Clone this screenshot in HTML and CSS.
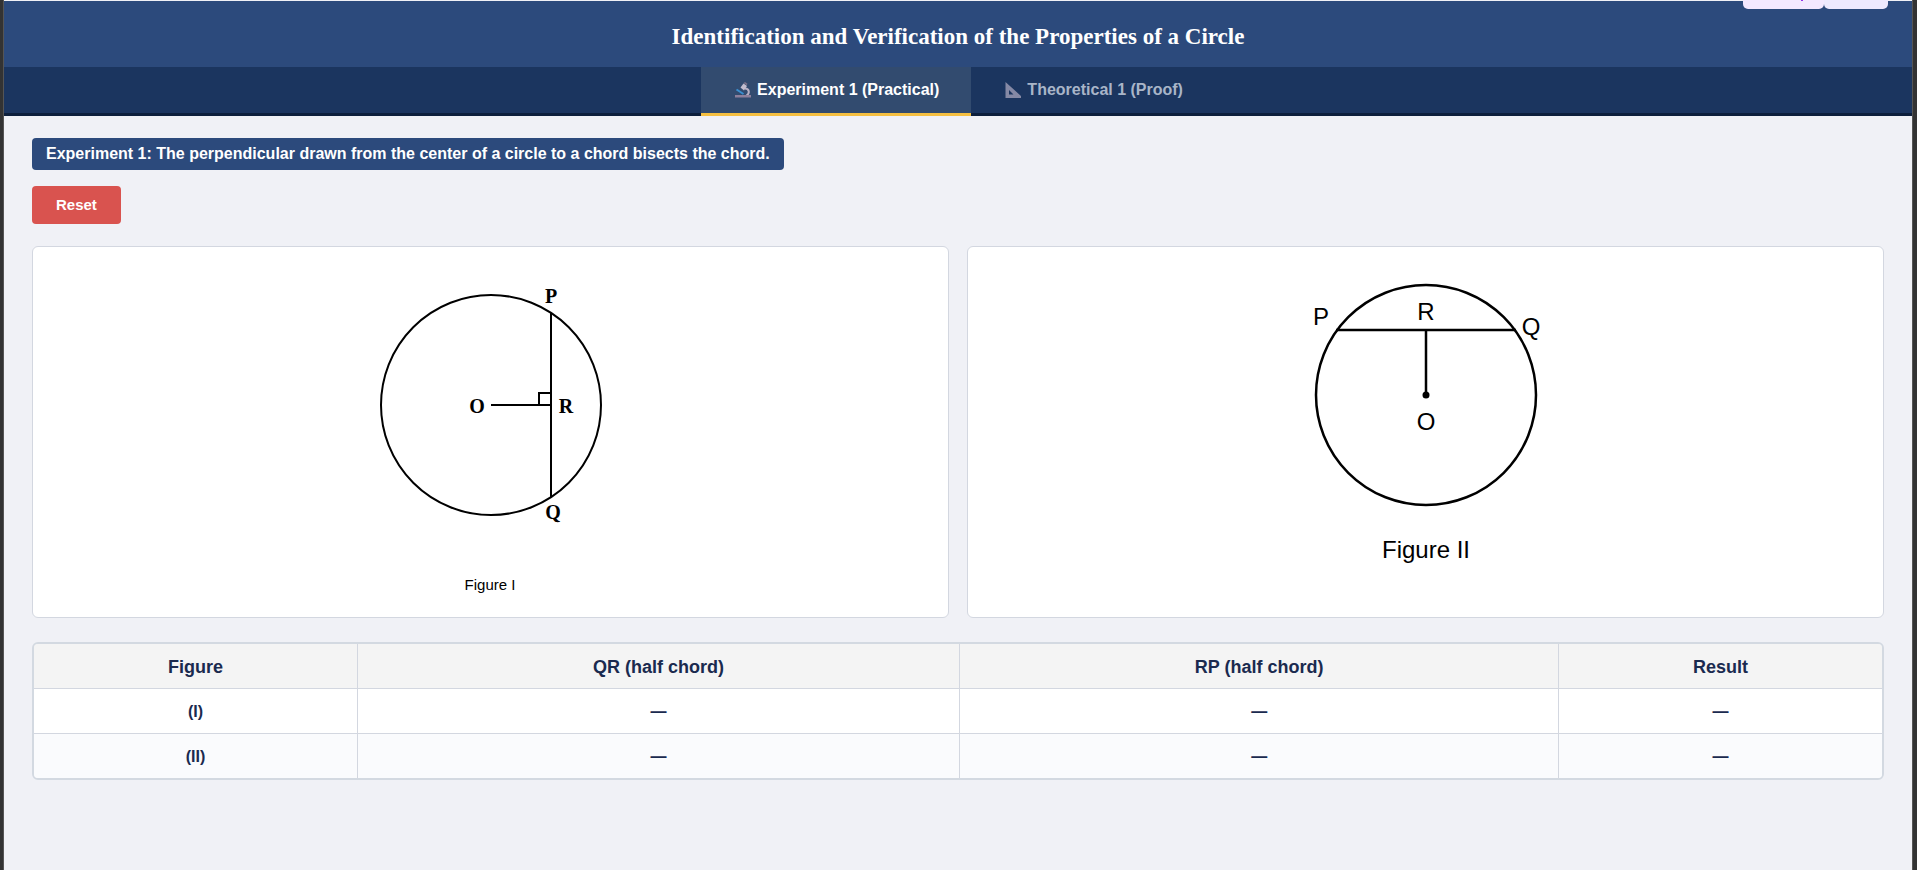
FILE: index.html
```html
<!DOCTYPE html>
<html lang="en">
<head>
    <meta charset="UTF-8">
    <meta name="viewport" content="width=device-width, initial-scale=1.0">
    <title>Properties of a Circle</title>
    <link rel="stylesheet" href="styles.css">
</head>
<body>

<div class="app">
    <header class="header">
        <h1>Identification and Verification of the Properties of a Circle</h1>
    </header>

    <div class="floating-tags">
        <span class="tag tag-purple"></span>
        <span class="tag tag-violet"></span>
    </div>

    <nav class="tabs">
        <button class="tab active" type="button">
            <svg class="tab-icon" viewBox="0 0 16 16" aria-hidden="true">
                <path d="M10 6.5c4.500 0 5 5 1.500 7" fill="none" stroke="#b9b2c6" stroke-width="2"/>
                <path d="M5.500 5.500 8.500 1.500l3.500 2.500-3 4.500z" fill="#c3bdce"/>
                <path d="M8.500 1 10 0l2.500 1.800-.8 1.500z" fill="#7a7189"/>
                <path d="M1.500 7.500 8.500 12" stroke="#3b8fd0" stroke-width="2"/>
                <path d="M0 13h16v2.500H0z" fill="#8d809c"/>
            </svg>
            Experiment 1 (Practical)
        </button>
        <button class="tab" type="button">
            <svg class="tab-icon" viewBox="0 0 16 16" aria-hidden="true">
                <path d="M.5 0 16 14v2H.5zM4 8v4.500h4.500z" fill="#8589a5" fill-rule="evenodd"/>
            </svg>
            Theoretical 1 (Proof)
        </button>
    </nav>

    <main class="content">
        <h2 class="experiment-title">Experiment 1: The perpendicular drawn from the center of a circle to a chord bisects the chord.</h2>

        <div class="controls">
            <button class="reset-btn" type="button">Reset</button>
        </div>

        <div class="figures">
            <div class="figure-box">
                <svg class="figure figure-one" viewBox="0 0 400 340">
                    <circle cx="200" cy="143" r="110"/>
                    <path d="M260 51v184M200 143h60M248 143v-12h12"/>
                    <text x="260" y="41">P</text>
                    <text x="262" y="257">Q</text>
                    <text x="186" y="151">O</text>
                    <text x="275" y="151">R</text>
                    <text class="caption" x="199" y="328">Figure I</text>
                </svg>
            </div>
            <div class="figure-box">
                <svg class="figure figure-two" viewBox="0 0 400 340">
                    <circle cx="200" cy="133" r="110"/>
                    <path d="M110 68h180M200 68v65"/>
                    <circle class="dot" cx="200" cy="133" r="3.5"/>
                    <text x="95" y="63">P</text>
                    <text x="200" y="58">R</text>
                    <text x="305" y="73">Q</text>
                    <text x="200" y="168">O</text>
                    <text x="200" y="296">Figure II</text>
                </svg>
            </div>
        </div>

        <div class="table-wrap">
            <table>
                <colgroup>
                    <col class="col-figure">
                    <col class="col-qr">
                    <col class="col-rp">
                    <col class="col-result">
                </colgroup>
                <thead>
                    <tr>
                        <th>Figure</th>
                        <th>QR (half chord)</th>
                        <th>RP (half chord)</th>
                        <th>Result</th>
                    </tr>
                </thead>
                <tbody>
                    <tr>
                        <td>(I)</td>
                        <td>—</td>
                        <td>—</td>
                        <td>—</td>
                    </tr>
                    <tr>
                        <td>(II)</td>
                        <td>—</td>
                        <td>—</td>
                        <td>—</td>
                    </tr>
                </tbody>
            </table>
        </div>
    </main>
</div>

</body>
</html>
```
FILE: styles.css
```css
* {
    box-sizing: border-box;
}
body {
    margin: 0;
    padding: 0 4px 0 3px;
    background-color: #333;
    font-family: Arial, "Liberation Sans", sans-serif;
    color: #1a2a4f;
}
.app {
    position: relative;
    min-height: 100vh;
    padding-top: 1px;
    border-left: 1px solid #555;
    border-right: 1px solid #555;
    background-color: #f0f1f6;
}
.header {
    background-color: #2c4a7c;
    color: #fff;
    text-align: center;
    padding: 23px 20px 17px;
}
.header h1 {
    margin: 0;
    font-family: "Times New Roman", "Liberation Serif", serif;
    font-size: 23px;
    line-height: 26px;
}

/* tags hanging over the top edge */
.floating-tags {
    position: absolute;
    top: 0;
    right: 24px;
    display: flex;
}
.tag {
    height: 9px;
    border-radius: 0 0 5px 5px;
}
.tag-purple {
    width: 81px;
    background: linear-gradient(#9333ea, #9333ea) 58px 0 / 2px 1px no-repeat #f3e8ff;
}
.tag-violet {
    width: 64px;
    background-color: #ede9fe;
}

.tabs {
    display: flex;
    justify-content: center;
    background-color: #1b355f;
    box-shadow: inset 0 -3px #0d1f3c;
}
.tab {
    display: flex;
    align-items: center;
    gap: 6px;
    padding: 13px 32px 13px 34px;
    border: none;
    border-bottom: 3px solid transparent;
    background: none;
    color: #a9b5c8;
    font-family: inherit;
    font-size: 16px;
    font-weight: bold;
    line-height: 20px;
    cursor: pointer;
}
.tab.active {
    color: #fff;
    background-color: #324b6f;
    border-bottom-color: #f5bf41;
}
.tab-icon {
    width: 16px;
    height: 16px;
}

.content {
    padding: 22px 28px;
}
.experiment-title {
    width: fit-content;
    margin: 0 0 16px;
    padding: 6px 14px;
    border-radius: 4px;
    background-color: #2c4a7c;
    color: #fff;
    font-size: 16px;
    line-height: 20px;
}
.controls {
    margin-bottom: 22px;
}
.reset-btn {
    display: block;
    padding: 9px 24px;
    border: none;
    border-radius: 4px;
    background-color: #d9534f;
    color: #fff;
    font-family: inherit;
    font-size: 15px;
    font-weight: bold;
    line-height: 20px;
    cursor: pointer;
}

.figures {
    display: grid;
    grid-template-columns: 1fr 1fr;
    gap: 18px;
    margin-bottom: 24px;
}
.figure-box {
    display: flex;
    justify-content: center;
    padding: 15px;
    border: 1px solid #d3d7e0;
    border-radius: 6px;
    background-color: #fff;
}
.figure {
    width: 400px;
    height: 340px;
    fill: none;
    stroke: #000;
    stroke-width: 2;
}
.figure text {
    fill: #000;
    stroke: none;
    text-anchor: middle;
}
.figure-one text {
    font: bold 20px "Times New Roman", "Liberation Serif", serif;
}
.figure-one .caption {
    font: 15px Arial, "Liberation Sans", sans-serif;
}
.figure-two {
    stroke-width: 2.5;
}
.figure-two text {
    font-size: 24px;
}
.figure-two .dot {
    fill: #000;
    stroke: none;
}

.table-wrap {
    border: 2px solid #d3d9e1;
    border-radius: 6px;
    overflow: hidden;
}
table {
    width: 100%;
    table-layout: fixed;
    border-collapse: collapse;
    border-style: hidden;
    text-align: center;
    line-height: 20px;
}
.col-figure, .col-result {
    width: 17.5%;
}
.col-qr {
    width: 32.6%;
}
.col-rp {
    width: 32.4%;
}
th, td {
    padding: 13px 12px 11px;
    border: 1px solid #d3d7e0;
}
th {
    background-color: #f4f4f4;
    font-size: 18px;
}
td {
    background-color: #fff;
    font-size: 16px;
    font-weight: bold;
}
tbody tr:nth-child(even) td {
    background-color: #fafbfd;
}
```
